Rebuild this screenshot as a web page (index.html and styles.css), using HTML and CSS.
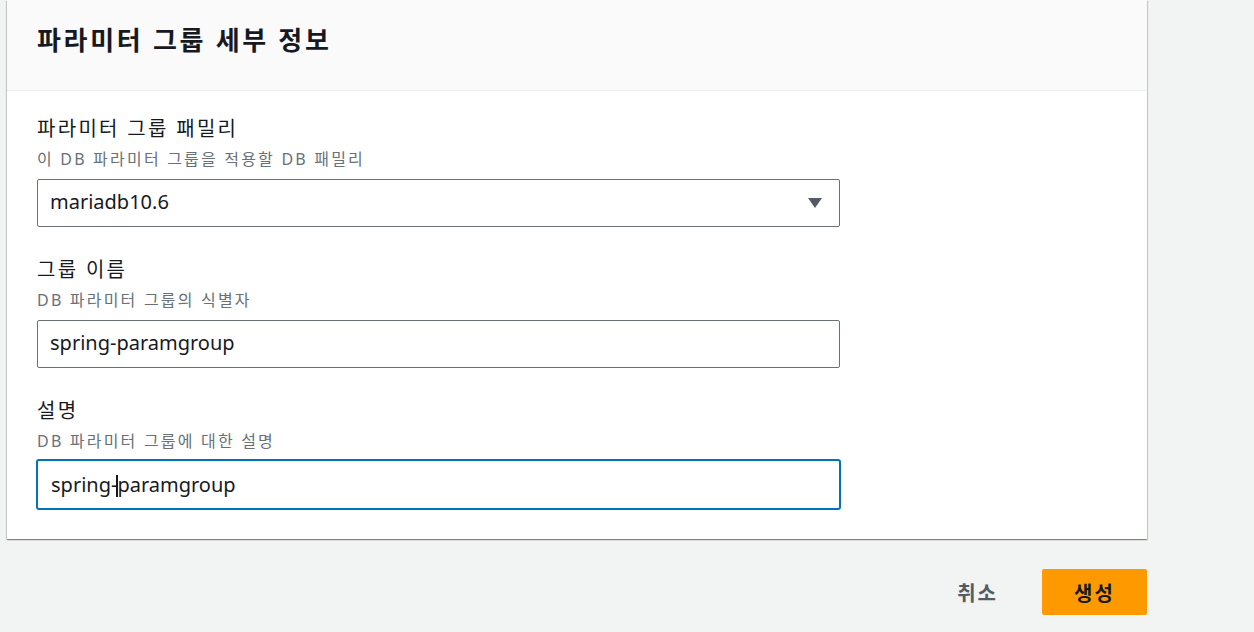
FILE: index.html
```html
<!DOCTYPE html>
<html lang="ko">
<head>
<meta charset="utf-8">
<link rel="stylesheet" href="styles.css">
</head>
<body>
<div class="page">
  <section class="card">
    <header class="card-header">
      <h2 class="title">파라미터 그룹 세부 정보</h2>
    </header>
    <div class="card-body">
      <div class="field">
        <div class="label">파라미터 그룹 패밀리</div>
        <div class="desc">이 DB 파라미터 그룹을 적용할 DB 패밀리</div>
        <div class="control select">
          <span class="value">mariadb10.6</span>
          <svg class="caret" width="16" height="12" viewBox="0 0 16 12"><path d="M1 1 L15 1 L8 11 Z" fill="#545b64"/></svg>
        </div>
      </div>
      <div class="field">
        <div class="label">그룹 이름</div>
        <div class="desc">DB 파라미터 그룹의 식별자</div>
        <div class="control"><span class="value">spring-paramgroup</span></div>
      </div>
      <div class="field">
        <div class="label">설명</div>
        <div class="desc">DB 파라미터 그룹에 대한 설명</div>
        <div class="control focused"><span class="value">spring-<span class="cursor"></span>paramgroup</span></div>
      </div>
    </div>
  </section>
  <div class="actions">
    <span class="btn-link">취소</span>
    <span class="btn-primary">생성</span>
  </div>
</div>
</body>
</html>
```
FILE: styles.css
```css
html, body {
  margin: 0;
  padding: 0;
  background: #f2f3f3;
}
body {
  font-family: "Noto Sans", "Noto Sans CJK KR", sans-serif;
  color: #16191f;
}
.page {
  width: 1140px;
  margin-left: 7px;
}
.card {
  background: #ffffff;
  box-shadow: 0 1px 1px 0 rgba(0, 28, 36, 0.3), 1px 1px 1px 0 rgba(0, 28, 36, 0.15), -1px 1px 1px 0 rgba(0, 28, 36, 0.15);
}
.card-header {
  background: #fafafa;
  border-bottom: 1px solid #eaeded;
  height: 91px;
  display: flex;
  align-items: center;
  padding-left: 30px;
  box-sizing: border-box;
}
.title {
  margin: 0;
  font-size: 26px;
  font-weight: 700;
  letter-spacing: 2.7px;
  line-height: 32px;
  margin-top: -10px;
}
.card-body {
  padding: 26px 30px 29px 30px;
}
.field + .field {
  margin-top: 31px;
}
.label {
  font-size: 20px;
  line-height: 24px;
  letter-spacing: 2.3px;
}
.desc {
  margin-top: 8px;
  font-size: 16px;
  line-height: 20px;
  color: #687078;
  letter-spacing: 2.2px;
}
.control {
  margin-top: 10px;
  width: 803px;
  height: 48px;
  box-sizing: border-box;
  border: 1px solid #687078;
  border-radius: 2px;
  display: flex;
  align-items: center;
  padding: 0 16px 3px 12px;
  font-size: 20px;
  background: #fff;
}
.value {
  flex: 1;
}
.select .caret {
  display: block;
  margin-top: 3px;
}
.focused {
  border: 2px solid #0073bb;
  border-radius: 3px;
  width: 805px;
  height: 51px;
  margin-top: 8px;
  margin-left: -1px;
  padding-left: 13px;
  padding-bottom: 0;
}
.cursor {
  display: inline-block;
  width: 2px;
  height: 22px;
  background: #16191f;
  vertical-align: -5px;
  margin: 0 -1px;
}
.actions {
  display: flex;
  justify-content: flex-end;
  align-items: center;
  margin-top: 30px;
}
.btn-link {
  font-size: 20px;
  font-weight: 700;
  color: #545b64;
  margin-right: 44px;
  letter-spacing: 2px;
}
.btn-primary {
  background: #ff9900;
  color: #16191f;
  font-size: 20px;
  font-weight: 700;
  width: 105px;
  height: 46px;
  border-radius: 2px;
  display: flex;
  align-items: center;
  justify-content: center;
  letter-spacing: 2px;
}
```
